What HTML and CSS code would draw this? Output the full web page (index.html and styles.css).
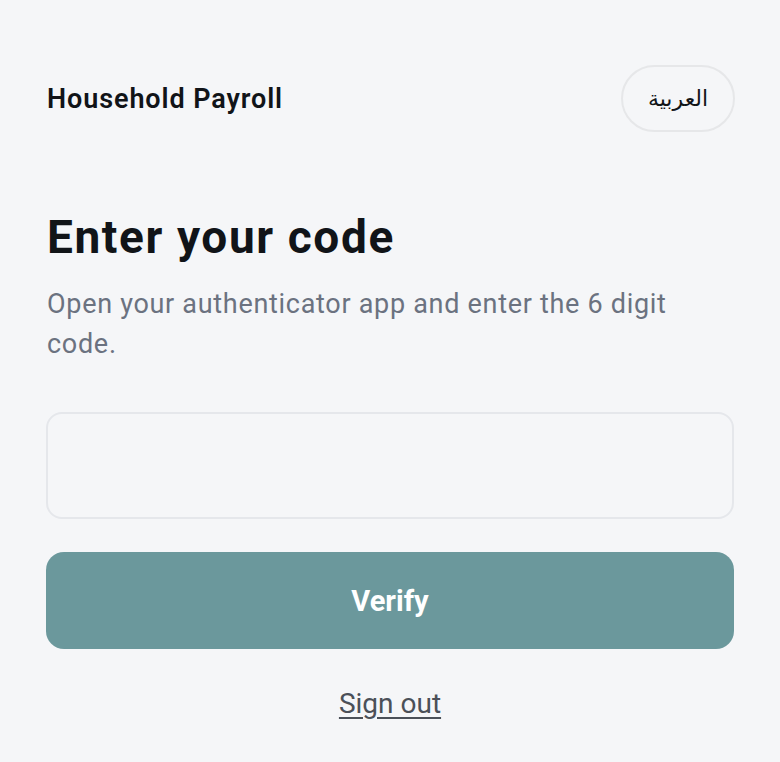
FILE: index.html
```html
<!DOCTYPE html>
<html lang="en">
<head>
<meta charset="utf-8">
<title>Enter your code</title>
<link rel="stylesheet" href="styles.css">
</head>
<body>
<main class="page">
  <header class="header">
    <div class="brand">Household Payroll</div>
    <button class="lang" type="button" lang="ar">العربية</button>
  </header>
  <h1 class="title">Enter your code</h1>
  <p class="subtitle">Open your authenticator app and enter the 6 digit code.</p>
  <form class="form">
    <input class="code" type="text" inputmode="numeric" autocomplete="one-time-code" aria-label="Code">
    <button class="verify" type="button">Verify</button>
  </form>
  <div class="signout-row"><a class="signout" href="#">Sign out</a></div>
</main>
</body>
</html>
```

FILE: styles.css
```css
html, body {
  margin: 0;
  padding: 0;
  background: #f5f6f8;
}
body {
  font-family: Roboto, "Noto Sans", "Liberation Sans", sans-serif;
  color: #111418;
}
.page {
  padding: 65px 46px 0 46px;
  display: flex;
  flex-direction: column;
}
.header {
  display: flex;
  justify-content: space-between;
  align-items: center;
}
.brand {
  font-size: 27px;
  font-weight: 600;
  padding-left: 1px;
  letter-spacing: 0.9px;
}
.lang {
  height: 67px;
  width: 114px;
  margin-right: -1px;
  border: 2px solid #e6e7e9;
  border-radius: 34px;
  background: #f5f6f8;
  font-family: "DejaVu Sans", "Liberation Sans", sans-serif;
  font-size: 22px;
  color: #111418;
  padding: 0;
}
.title {
  margin: 79px 0 0 0;
  font-size: 46px;
  line-height: 53px;
  font-weight: 700;
  letter-spacing: 1.6px;
  padding-left: 1px;
}
.subtitle {
  margin: 20px 0 0 0;
  max-width: 640px;
  font-size: 27px;
  line-height: 40px;
  color: #6b7280;
  padding-left: 1px;
  letter-spacing: 0.7px;
}
.form {
  display: flex;
  flex-direction: column;
  gap: 33px;
  margin-top: 48px;
}
.code {
  box-sizing: border-box;
  height: 107px;
  width: 100%;
  border: 2px solid #e5e7eb;
  border-radius: 16px;
  background: #f5f6f8;
  font-size: 28px;
  padding: 0 20px;
}
.verify {
  height: 97px;
  width: 100%;
  border: none;
  border-radius: 18px;
  background: #6b989c;
  color: #ffffff;
  font-family: Roboto, "Noto Sans", sans-serif;
  font-size: 29px;
  font-weight: 700;
}
.signout-row {
  margin-top: 35px;
  text-align: center;
}
.signout {
  font-size: 28px;
  line-height: 40px;
  color: #4b5058;
  text-decoration: underline;
  text-underline-offset: 4px;
}
```
